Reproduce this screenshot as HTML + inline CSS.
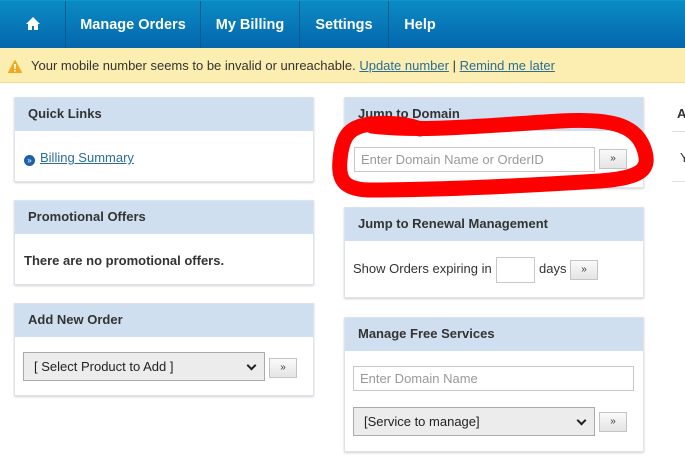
<!DOCTYPE html>
<html><head><style>
*{box-sizing:border-box;margin:0;padding:0}
body{width:685px;height:475px;overflow:hidden;background:#fff;font-family:"Liberation Sans",sans-serif;font-size:13px;color:#333;position:relative}
.nav{position:absolute;left:0;top:0;width:685px;height:48px;background:linear-gradient(#0a8bc3,#0566ae);border-top:1px solid #0b97c9}
.nav div{position:absolute;top:0;height:48px;line-height:48px;color:#fff;font-weight:bold;font-size:14.5px;border-right:1px solid #0a5a8e;text-align:center}
.alert{position:absolute;left:0;top:48px;width:685px;height:35px;background:#fbeeb0;border-bottom:1px solid #f0dd8a;line-height:36px;font-size:13px;color:#333;padding-left:31px}
.alert a{color:#2a6d9a;text-decoration:underline}
.p{position:absolute;background:#fff;border:1px solid #dde3ea;box-shadow:0 1px 2px rgba(0,0,0,.18)}
.h{background:#d0dff0;height:33px;line-height:32px;padding-left:13px;font-weight:bold;font-size:13px;color:#333}
.in{position:absolute;border:1px solid #c8c8c8;background:#fff;color:#999;font-size:13px;padding-left:6px;line-height:23px;height:25px}
.btn{position:absolute;width:28px;height:20px;border:1px solid #c4c4c4;background:linear-gradient(#fafafa,#e4e4e4);font-size:10px;text-align:center;line-height:18px;color:#333}
.sel{position:absolute;height:29px;border:1px solid #aaa;background:#ececec;color:#222;font-size:13px;line-height:27px;padding-left:10px}
.sel:after{content:"";position:absolute;right:9px;top:9px;width:5px;height:5px;border-right:2px solid #222;border-bottom:2px solid #222;transform:rotate(45deg)}
</style></head><body>
<div class="nav">
<div style="left:0;width:66px"><svg width="16" height="15" viewBox="0 0 16 15" style="vertical-align:-2px"><path d="M8 1L1 8h2v6h4v-4h2v4h4V8h2z" fill="#fff"/></svg></div>
<div style="left:66px;width:135px">Manage Orders</div>
<div style="left:201px;width:99px">My Billing</div>
<div style="left:300px;width:89px">Settings</div>
<div style="left:389px;width:62px;border:none">Help</div>
</div>
<div class="alert"><svg width="14" height="13" viewBox="0 0 14 13" style="position:absolute;left:8px;top:12px"><path d="M7 0.5L13.5 12.5H0.5Z" fill="#f0a81c" stroke="#f0a81c" stroke-linejoin="round"/><rect x="6.2" y="4" width="1.6" height="5" fill="#fff"/><rect x="6.2" y="10" width="1.6" height="1.5" fill="#fff"/></svg>Your mobile number seems to be invalid or unreachable. <a>Update number</a> | <a>Remind me later</a></div>

<div class="p" style="left:14px;top:97px;width:300px;height:85px"><div class="h">Quick Links</div>
<div style="position:absolute;left:9px;top:52px;font-size:13px"><span style="display:inline-block;width:11px;height:11px;border-radius:50%;background:#1d5fa8;color:#fff;font-size:8px;line-height:11px;text-align:center;vertical-align:-1px;margin-right:5px">»</span><a style="color:#2a6d9a;text-decoration:underline">Billing Summary</a></div></div>

<div class="p" style="left:14px;top:200px;width:300px;height:85px"><div class="h">Promotional Offers</div>
<div style="position:absolute;left:9px;top:52px;font-weight:bold">There are no promotional offers.</div></div>

<div class="p" style="left:14px;top:303px;width:300px;height:93px"><div class="h">Add New Order</div>
<div class="sel" style="left:8px;top:48px;width:242px">[ Select Product to Add ]</div>
<div class="btn" style="left:254px;top:54px">»</div></div>

<div class="p" style="left:344px;top:97px;width:300px;height:91px"><div class="h">Jump to Domain</div>
<div class="in" style="left:9px;top:49px;width:241px">Enter Domain Name or OrderID</div>
<div class="btn" style="left:254px;top:51px">»</div></div>

<div class="p" style="left:344px;top:207px;width:300px;height:91px"><div class="h">Jump to Renewal Management</div>
<div style="position:absolute;left:8px;top:53px">Show Orders expiring in</div>
<div class="in" style="left:151px;top:49px;width:39px;height:26px"></div>
<div style="position:absolute;left:194px;top:53px">days</div>
<div class="btn" style="left:225px;top:52px">»</div></div>

<div class="p" style="left:344px;top:317px;width:300px;height:135px"><div class="h">Manage Free Services</div>
<div class="in" style="left:8px;top:48px;width:281px;color:#999">Enter Domain Name</div>
<div class="sel" style="left:8px;top:89px;width:242px">[Service to manage]</div>
<div class="btn" style="left:254px;top:94px">»</div></div>

<div style="position:absolute;left:677px;top:106px;font-weight:bold">A</div>
<div style="position:absolute;left:672px;top:131px;width:13px;border-top:1px solid #ddd"></div>
<div style="position:absolute;left:680px;top:150px">Y</div>
<div style="position:absolute;left:672px;top:181px;width:13px;border-top:1px solid #ddd"></div>

<svg width="685" height="475" style="position:absolute;left:0;top:0;pointer-events:none"><path d="M372 126 C420 132,480 126,560 121 C615 118,638 126,645 152 C650 170,640 178,600 181 C520 186,430 190,368 190 C344 189,338 180,340 160 C342 135,350 126,372 124 C392 122,410 125,420 129" fill="none" stroke="#ff0000" stroke-width="15" stroke-linecap="round" stroke-linejoin="round"/></svg>
</body></html>
